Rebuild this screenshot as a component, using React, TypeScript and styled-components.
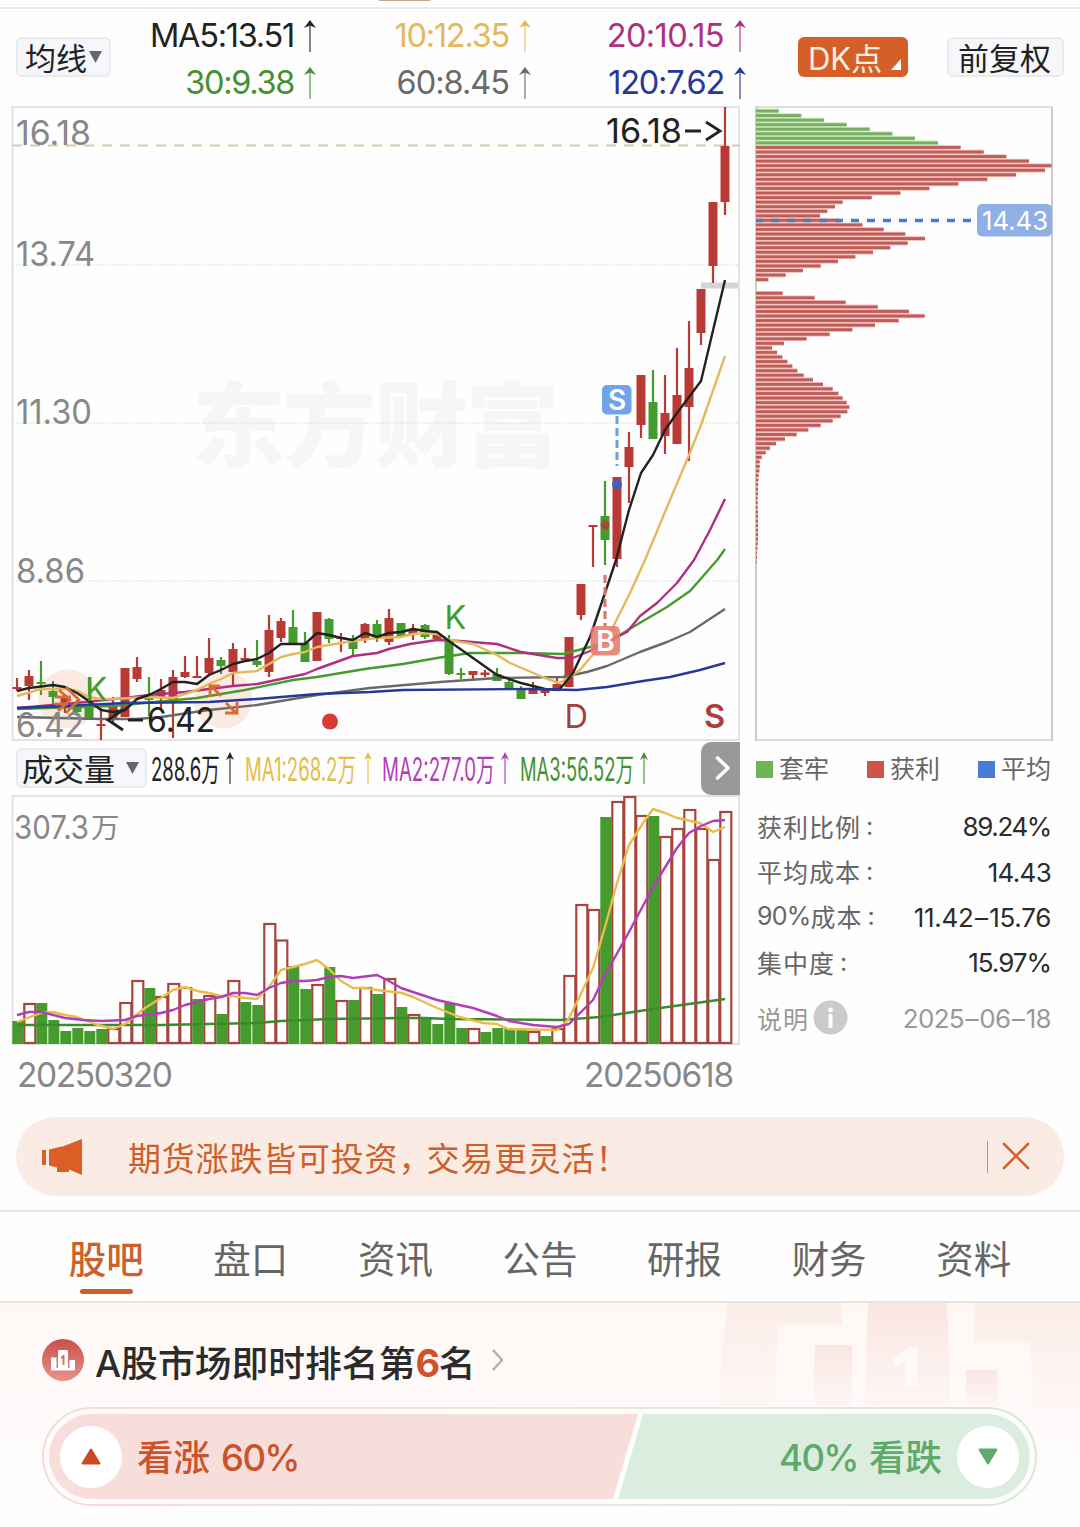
import React from "react";
import styled, { createGlobalStyle } from "styled-components";

const FONT = `Inter, "Noto Sans CJK SC", "Noto Sans", sans-serif`;

const C = {
  red: "#b93a35",
  green: "#459b2d",
  volRed: "#a8453f",
  volGreen: "#459b2d",
  orange: "#d4622c",
  yellow: "#e6b85c",
  magenta: "#b02f80",
  grey: "#6a6a6a",
  blue: "#26399b",
  purple: "#b53cb8",
  axis: "#888888",
  frame: "#e2e2e2",
};

/* ---------- data ---------- */

type Candle = [string, number, number, number, number]; // colour, body top, body bottom, high, low

const candles: Candle[] = [
  ["r", 687, 689, 678, 691], ["r", 676, 686, 670, 700], ["g", 682, 684, 661, 695],
  ["g", 691, 697, 681, 705], ["r", 697, 705, 694, 713], ["g", 706, 712, 700, 716],
  ["g", 705, 720, 677, 720], ["r", 724, 726, 708, 740], ["r", 706, 718, 697, 722],
  ["r", 668, 717, 668, 717], ["r", 667, 679, 657, 682], ["g", 697, 700, 677, 716],
  ["r", 690, 698, 679, 708], ["r", 677, 703, 670, 738], ["r", 672, 677, 656, 678],
  ["r", 676, 678, 656, 678], ["r", 658, 673, 638, 674], ["g", 660, 666, 657, 674],
  ["r", 649, 672, 643, 686], ["r", 658, 660, 648, 661], ["g", 661, 665, 640, 667],
  ["r", 630, 672, 615, 677], ["r", 621, 638, 618, 642], ["g", 627, 643, 610, 643],
  ["g", 643, 662, 632, 662], ["r", 612, 661, 612, 661], ["g", 619, 639, 618, 643],
  ["r", 637, 639, 633, 652], ["g", 639, 649, 635, 655], ["r", 624, 639, 623, 643],
  ["g", 624, 637, 620, 642], ["r", 618, 642, 609, 645], ["g", 623, 637, 623, 637],
  ["r", 630, 634, 624, 640], ["g", 625, 637, 624, 639], ["r", 634, 639, 634, 639],
  ["g", 640, 674, 635, 675], ["g", 673, 675, 668, 679], ["r", 671, 675, 671, 681],
  ["r", 672.5, 675, 670, 677], ["g", 674, 681, 668, 681], ["g", 682, 690, 680, 690],
  ["g", 689, 699, 686, 699], ["r", 689, 694, 682, 694], ["r", 690, 693, 690, 696],
  ["r", 684, 691, 678, 691], ["r", 637, 687, 637, 687], ["r", 584, 615, 584, 620],
  ["r", 525, 527, 525, 567], ["g", 516, 540, 481, 565], ["r", 477, 559, 477, 567],
  ["r", 447, 467, 432, 503], ["r", 375, 425, 375, 438], ["g", 402, 439, 370, 439],
  ["r", 413, 436, 375, 454], ["r", 395, 444, 348, 444], ["r", 368, 407, 321, 461],
  ["r", 289, 333, 289, 345], ["r", 202, 266, 202, 283], ["r", 146, 202, 107, 215],
];

const priceLines: [string, string][] = [
  [C.grey, "17,717 60,718 101,719 137,719 161,717 209,710 257,705 317,695 370,688 440,682 497,678 563,677 587,672 607,666 640,652 667,642 690,632 725,609"],
  [C.green, "17,709 113,706 197,698 245,690 293,680 317,677 365,669 403,664 437,658 470,653 521,653 563,654 590,647 605,643 623,633 643,621 667,607 690,591 705,574 718,559 725,549"],
  [C.magenta, "17,708 65,704 125,698 149,695 185,692 233,686 257,684 305,674 317,669 353,656 377,653 389,649 410,644 437,640 460,641 497,644 521,652 557,658 573,658 590,651 627,632 640,616 657,603 677,583 694,560 710,530 725,499"],
  [C.yellow, "17,696 41,689 65,689 77,691 89,697 101,699 113,699 149,697 173,698 197,690 209,684 221,679 233,673 257,671 281,657 293,654 305,652 317,647 353,641 377,638 401,637 413,634 425,633 437,634 449,640 473,644 497,655 510,663 545,678 559,683 568,678 580,670 590,658 607,640 615,623 630,593 645,560 670,500 689,455 701,425 725,356"],
  ["#222222", "17,691 29,688 53,685 65,687 77,693 89,701 101,710 113,712 125,710 137,699 149,695 161,689 173,682 185,682 197,684 209,675 221,670 233,664 245,661 257,659 269,653 281,644 305,644 317,633 329,635 341,638 353,640 365,633 377,637 389,633 401,632 413,629 425,631 437,632 449,641 473,658 497,675 521,683 545,689 559,690 573,673 590,637 605,593 616,560 629,510 641,473 653,455 665,430 677,413 701,381 725,280"],
  [C.blue, "17,708 65,706 125,703 209,702 257,699 317,694 370,692 403,690 527,689 577,690 607,687 643,681 670,677 700,670 725,663"],
];

const volumes: [string, number][] = [
  ["g", 1021], ["r", 1003], ["g", 1003], ["g", 1020], ["g", 1031], ["g", 1028],
  ["g", 1031], ["g", 1029], ["r", 1028], ["r", 1002], ["r", 980], ["g", 988],
  ["r", 996], ["r", 983], ["r", 987], ["g", 999], ["r", 995], ["g", 1014],
  ["r", 980], ["g", 1002], ["g", 1005], ["r", 923], ["r", 939.5], ["g", 966],
  ["g", 989], ["r", 984], ["g", 967], ["r", 1000], ["g", 1000], ["r", 987],
  ["g", 994], ["r", 978], ["g", 1007], ["r", 1014], ["g", 1018], ["g", 1024],
  ["g", 1003], ["g", 1028], ["r", 1028], ["g", 1032], ["g", 1028], ["g", 1028],
  ["g", 1030], ["r", 1031], ["g", 1036], ["r", 1028], ["r", 975], ["r", 904],
  ["r", 909], ["g", 817], ["r", 801], ["r", 796], ["r", 815], ["g", 816],
  ["r", 836], ["r", 828], ["r", 809], ["r", 828], ["r", 859], ["r", 811],
];

const volumeLines: [string, string][] = [
  ["#3d8a2c", "17,1025 161,1025 257,1023 281,1021 329,1019 401,1018 425,1018 449,1019 560,1020 600,1017 653,1009 725,999"],
  ["#e8bd4c", "17,1022 41,1013 53,1012 65,1015 77,1017 95,1024 113,1029 125,1024 145,1008 161,998 173,990 185,987 197,991 209,993 221,996 233,996 245,998 257,999 269,987 281,970 293,967 305,964 317,960 329,969 341,981 353,988 365,988 377,990 402,993 413,997 437,1008 460,1017 483,1023 497,1024 508,1029 557,1030 568,1020 578,1000 593,968 605,927 617,883 629,845 643,823 653,809 665,813 677,818 700,823 713,832 725,827"],
  [C.purple, "17,1015 29,1012 41,1012 65,1018 83,1020 101,1021 125,1020 137,1016 161,1013 173,1010 185,1005 209,999 221,997 233,993 245,993 257,995 269,988 281,983 293,981 305,981 317,980 329,977 341,976 353,978 377,975 389,981 401,988 413,992 437,1000 473,1008 497,1016 509,1021 533,1025 557,1027 569,1024 593,1000 605,975 629,932 653,887 677,848 689,833 701,826 713,821 725,820"],
];

// Bar lengths of the cost distribution, in thirds of a pixel.
const chips = [
  68, 136, 204, 272, 341, 409, 477, 546, 614, 683, 751, 819, 887, 867, 780, 694, 607, 520, 433, 347,
  260, 237, 214, 192, 250, 319, 383, 448, 507, 455, 403, 351, 298, 246, 194, 141, 89, 37, 0, 0,
  80, 176, 269, 365, 459, 506, 428, 357, 289, 221, 152, 84, 48, 63, 79, 94, 109, 124, 143, 171,
  201, 230, 247, 260, 272, 280, 274, 254, 230, 194, 157, 122, 87, 60, 42, 29, 17, 11, 11, 10,
  8, 7, 6, 6, 6, 5, 5, 5, 6, 6, 6, 6, 6, 6, 6, 5, 4, 3, 3, 2,
];

/* ---------- shared styles ---------- */

const Global = createGlobalStyle`
  * { box-sizing: border-box; }
  body { margin: 0; background: #fefefe; font-family: ${FONT}; }
  svg { display: block; flex: none; overflow: visible; }
  svg text { font-family: ${FONT}; }
`;

const Page = styled.div`
  width: 1080px;
  height: 1527px;
  overflow: hidden;
  display: flex;
  flex-direction: column;
`;

const Pill = styled.button<{ $w: number; $solid?: boolean; $pad?: number }>`
  width: ${(p) => p.$w}px;
  height: 40px;
  padding: 3px 0 0 ${(p) => p.$pad ?? 8}px;
  flex: none;
  display: flex;
  align-items: center;
  white-space: nowrap;
  border: ${(p) => (p.$solid ? "0" : "2px solid #e9eaec")};
  border-radius: 6px;
  background: ${(p) => (p.$solid ? "#d55f27" : "#f6f7fa")};
  color: ${(p) => (p.$solid ? "#fdeee0" : "#222")};
  font: 400 31px/36px ${FONT};
`;
const Caret = styled.svg<{ $ml?: number }>`
  margin-left: ${(p) => p.$ml ?? 2}px;
  margin-top: -3px;
`;
const Corner = styled.svg`
  margin-left: 9px;
  margin-top: 12px;
`;

/* ---------- top ---------- */

const TopEdge = styled.div`
  height: 9px;
  flex: none;
  border-bottom: 2px solid #e8eaeb;
  padding-left: 379px;
`;
const TopMark = styled.div`
  width: 51px;
  height: 1px;
  background: #c9a48c;
`;
const Header = styled.header`
  height: 97px;
  flex: none;
  display: flex;
  padding: 1px 16px 0;
`;
const PillSlot = styled.div<{ $ml?: number }>`
  margin-left: ${(p) => p.$ml ?? 0}px;
  padding-top: 27px;
`;
const MaGrid = styled.div`
  display: grid;
  grid-template-columns: 206px 215px 215px;
  grid-template-rows: 47px 47px;
  padding-top: 2px;
`;
const MaItem = styled.div<{ $c: string; $ls: number }>`
  display: flex;
  align-items: center;
  justify-content: flex-end;
  gap: 9px;
  color: ${(p) => p.$c};
  font-size: 32.5px;
  line-height: 47px;
  letter-spacing: ${(p) => p.$ls}px;
  white-space: nowrap;
`;

const UpArrow = ({ color, w = 14 }: { color: string; w?: number }) => (
  <svg width={w} height="32" viewBox={`${-w / 2} 0 ${w} 32`} fill={color}>
    <path d={`M0 0L${w / 2 - 1} 8L0 5.5L${-w / 2 + 1} 8Z`} />
    <rect x="-0.75" y="4" width="1.5" height="28" opacity=".75" />
  </svg>
);

/* ---------- charts ---------- */

const Main = styled.main`
  display: flex;
  height: 1001px;
  flex: none;
`;
const ChartColumn = styled.section`
  width: 740px;
  display: flex;
  flex-direction: column;
`;
const VolumeBar = styled.div`
  height: 54px;
  display: flex;
  align-items: center;
  padding-left: 16px;
`;
const VolItem = styled.div<{ $c: string; $w: number; $ml: number }>`
  width: ${(p) => p.$w}px;
  margin-left: ${(p) => p.$ml}px;
  height: 40px;
  display: flex;
  align-items: center;
  justify-content: space-between;
  color: ${(p) => p.$c};
`;
const Narrow = styled.span<{ $k: number }>`
  width: 0;
  font-size: 32px;
  line-height: 40px;
  padding-top: 4px;
  white-space: nowrap;
  transform: scaleX(${(p) => p.$k});
  transform-origin: left center;
`;
const NextButton = styled.button`
  width: 39px;
  height: 53px;
  margin-left: auto;
  padding: 0;
  border: 0;
  border-radius: 10px 0 0 10px;
  background: #999;
  display: flex;
  align-items: center;
  justify-content: center;
`;
const Dates = styled.div`
  display: flex;
  justify-content: space-between;
  padding: 9px 7px 0 17px;
  color: ${C.axis};
  font-size: 33.5px;
  line-height: 42px;
`;
const DateText = styled.span<{ $ls: number }>`
  letter-spacing: ${(p) => p.$ls}px;
`;

const cx = (i: number) => 17 + 12 * i;

const Num = ({ x = 16, y, w, fill = C.axis, children }: { x?: number; y: number; w: number; fill?: string; children: string }) => (
  <text x={x} y={y} fontSize="33.5" fill={fill} textLength={w} lengthAdjust="spacingAndGlyphs">{children}</text>
);

const PriceChart = () => (
  <svg width="740" height="635" viewBox="0 106 740 635">
    <text x="192" y="460" fontSize="93" fontWeight="900" fill="#f6f6f7" textLength="367">东方财富</text>
    <rect x="12.5" y="107" width="726.5" height="633" fill="none" stroke={C.frame} strokeWidth="2" />
    {[265, 423, 581].map((y) => (
      <line key={y} x1="13" x2="738" y1={y} y2={y} stroke="#d6d6d6" strokeWidth="1.2" strokeDasharray="1.5 1.5" />
    ))}
    <line x1="12" x2="740" y1="145.5" y2="145.5" stroke="#dcc8ab" strokeWidth="2" strokeDasharray="10 8" />
    <circle cx="68" cy="699" r="29.5" fill="#fbeae2" />
    <circle cx="223" cy="699" r="29.5" fill="#fbeae2" />
    <rect x="701" y="282.5" width="37" height="6" fill="#d3d4d9" />
    {candles.map(([k, t, b, h, l], i) => (
      <g key={i} fill={k === "r" ? C.red : C.green}>
        <rect x={cx(i) - 1.1} y={h} width="2.2" height={l - h} />
        <rect x={cx(i) - 4.5} y={t} width="9" height={b - t} />
      </g>
    ))}
    {priceLines.map(([c, pts]) => (
      <polyline key={c} points={pts} fill="none" stroke={c} strokeWidth="2.4" strokeLinejoin="round" />
    ))}
    <Num y={144.5} w={75}>16.18</Num>
    <Num y={266} w={79}>13.74</Num>
    <Num y={424} w={76}>11.30</Num>
    <Num y={583} w={69}>8.86</Num>
    <Num y={737} w={68}>6.42</Num>
    <g fill="none" stroke="#d96a35" strokeWidth="2.8">
      <path d="M66 687L79 700L66 713M59 690L70 700L58 711M55 697H71M55 704H68" />
      <path d="M221 696L210 685M220 686H210V697M226 703L237 714M225 713H237V702" />
    </g>
    <g fontSize="32.5">
      <text x="85.5" y="700.5" fill={C.green}>K</text>
      <text x="444.5" y="629" fill={C.green}>K</text>
      <text x="564.5" y="727.5" fill="#a83c36">D</text>
      <text x="704" y="728" fill="#b03a36" fontWeight="600">S</text>
    </g>
    <Num x={147} y={732} w={68} fill="#222">6.42</Num>
    <path d="M123 710L108 720L123 730M128 720H143" fill="none" stroke="#222" strokeWidth="2.8" />
    <Num x={606} y={142.5} w={76} fill="#222">16.18</Num>
    <path d="M685 131H701M706 122L720 131L706 140" fill="none" stroke="#222" strokeWidth="2.8" />
    <circle cx="330" cy="721.5" r="8" fill="#d93a34" />
    <line x1="617" x2="617" y1="416" y2="466" stroke="#6c9fe0" strokeWidth="3" strokeDasharray="8 4" />
    <circle cx="617" cy="484.5" r="5" fill="#4a5cb8" />
    <circle cx="605" cy="525" r="4.5" fill={C.red} opacity=".8" />
    <rect x="602" y="385" width="29.5" height="29.5" rx="5" fill="#71a2ec" />
    <text x="617" y="410" fontSize="28" fontWeight="600" fill="#fff" textAnchor="middle">S</text>
    <line x1="605" x2="605" y1="575" y2="626" stroke="#dd7064" strokeWidth="3" strokeDasharray="8 4" />
    <rect x="590.5" y="626" width="29.5" height="29.5" rx="5" fill="#e67c6c" fillOpacity=".88" />
    <text x="605.5" y="651" fontSize="28" fontWeight="600" fill="#fff" textAnchor="middle">B</text>
  </svg>
);

const VolumeChart = () => (
  <svg width="740" height="250" viewBox="0 795 740 250">
    <rect x="12.5" y="796" width="726.5" height="248" fill="none" stroke={C.frame} strokeWidth="2" />
    {volumes.map(([k, t], i) =>
      k === "g" ? (
        <rect key={i} x={cx(i) - 4.7} y={t} width="11" height={1044 - t} fill={C.volGreen} />
      ) : (
        <rect key={i} x={cx(i) - 4.7} y={t + 1} width="11" height={1042 - t} fill="#fff" stroke={C.volRed} strokeWidth="2.2" />
      )
    )}
    {volumeLines.map(([c, pts]) => (
      <polyline key={c} points={pts} fill="none" stroke={c} strokeWidth="2.4" strokeLinejoin="round" />
    ))}
    <text x="14" y="839" fontSize="32" fill={C.axis} textLength="75" lengthAdjust="spacingAndGlyphs">307.3</text>
    <text x="91" y="838" fontSize="28.5" fill={C.axis}>万</text>
  </svg>
);

/* ---------- side panel ---------- */

const Side = styled.aside`
  width: 298px;
  margin-left: 15px;
  display: flex;
  flex-direction: column;
`;
const Legend = styled.div`
  display: flex;
  justify-content: space-between;
  padding: 8px 2px 0 1px;
  height: 63px;
`;
const LegendItem = styled.div<{ $c: string }>`
  height: 40px;
  display: flex;
  align-items: center;
  gap: 6px;
  font-size: 25px;
  line-height: 38px;
  color: #666;
  &::before {
    content: "";
    width: 17px;
    height: 17px;
    background: ${(p) => p.$c};
  }
`;
const Stat = styled.div<{ $h?: number; $c?: string }>`
  height: ${(p) => p.$h ?? 45.4}px;
  display: flex;
  align-items: center;
  justify-content: space-between;
  padding: 0 2px;
  font-size: 25px;
  color: ${(p) => p.$c ?? "#666"};
`;
const StatLabel = styled.span`
  display: flex;
  align-items: center;
  gap: 5px;
  padding-bottom: 2px;
  letter-spacing: 1px;
`;
const Percent = styled.span`
  margin-right: -5px;
  letter-spacing: -0.8px;
`;
const StatValue = styled.span<{ $ls?: number; $c?: string }>`
  font-size: 26px;
  letter-spacing: ${(p) => p.$ls ?? 0}px;
  color: ${(p) => p.$c ?? "#2c2c2c"};
`;
const Dash = styled.span`
  padding: 0 1.5px;
`;

const Distribution = () => (
  <svg width="298" height="635" viewBox="755 106 298 635">
    <path d="M755 107H1052M755 740H1052" stroke="#dedede" strokeWidth="2" />
    <path d="M756 107V741M1052 107V741" stroke="#cacaca" strokeWidth="2" />
    {chips.map((w, i) =>
      w ? (
        <g key={i} transform={`translate(756 ${111 + i * 4.556})`}>
          <rect y="-2.3" width={w / 3} height="4.6" fill={i < 8 ? "#bfe6ac" : "#f3b9b4"} />
          <rect y="-1.4" width={w / 3} height="2.8" fill={i < 8 ? "#78ad62" : "#bd5d5a"} />
        </g>
      ) : null
    )}
    <line x1="756" x2="973" y1="220.5" y2="220.5" stroke="#4b7cc0" strokeWidth="3.4" strokeDasharray="8 8" strokeDashoffset="1" />
    <rect x="977" y="204" width="75" height="32.5" rx="5" fill="#8eb0e5" />
    <text x="982" y="230" fontSize="26" fill="#fff" textLength="66" lengthAdjust="spacingAndGlyphs">14.43</text>
  </svg>
);

const InfoIcon = () => (
  <svg width="35" height="35" viewBox="0 0 35 35">
    <circle cx="16.5" cy="17.5" r="17" fill="#cbcbcb" />
    <rect x="14.5" y="14" width="4" height="14" rx="1" fill="#fff" />
    <circle cx="16.5" cy="10" r="2.4" fill="#fff" />
  </svg>
);

/* ---------- banner ---------- */

const Banner = styled.div`
  height: 79px;
  margin: 10px 16px 14px;
  flex: none;
  border-radius: 40px;
  background: #faece4;
  display: flex;
  align-items: center;
  padding: 0 34px 0 26px;
  color: #cf5f2a;
`;
const BannerText = styled.span`
  margin-left: 46px;
  font-size: 33px;
  line-height: 40px;
  letter-spacing: 0.8px;
  padding-top: 4px;
  white-space: nowrap;
`;
const Tight = styled.span`
  letter-spacing: -5px;
`;
const BannerRule = styled.i`
  width: 1.5px;
  height: 32px;
  margin: 0 14px 0 auto;
  background: #d98a63;
`;

/* ---------- tabs ---------- */

const Tabs = styled.nav`
  height: 93px;
  flex: none;
  display: grid;
  grid-template-columns: repeat(7, 1fr);
  padding: 0 34px;
  border-top: 2px solid #e7e7e7;
  border-bottom: 2px solid #e4e6e6;
`;
const Tab = styled.a<{ $on?: boolean }>`
  display: flex;
  flex-direction: column;
  align-items: center;
  padding-top: 21px;
  font-size: 37.5px;
  font-weight: ${(p) => (p.$on ? 500 : 400)};
  line-height: 54px;
  color: ${(p) => (p.$on ? "#cd612c" : "#666")};
  &::after {
    content: "";
    width: 53px;
    height: 5px;
    margin-top: 2px;
    border-radius: 3px;
    background: ${(p) => (p.$on ? "#c9602c" : "transparent")};
  }
`;

/* ---------- ranking ---------- */

const Ranking = styled.section`
  position: relative;
  flex: 1;
  padding: 36px 43px 0 42px;
  background: linear-gradient(#fef8f4, #fffafa 55%, #fefefe 90%);
`;
const PodiumArt = styled.svg`
  position: absolute;
  top: 0;
  right: 0;
`;
const RankRow = styled.div`
  position: relative;
  height: 42px;
  display: flex;
  align-items: center;
  white-space: nowrap;
`;
const RankTitle = styled.h2`
  margin: 0 18px 0 11px;
  padding-top: 6px;
  font: 500 36.8px/42px ${FONT};
  color: #2b2b2b;
`;
const RankNo = styled.b`
  font-size: 38px;
  letter-spacing: -1.5px;
  color: #d0522a;
`;
const VoteFrame = styled.div`
  position: relative;
  height: 99px;
  margin-top: 26px;
  padding: 2px;
  border-radius: 50px;
  background: linear-gradient(90deg, #f5dbd8, #ece6de 50%, #d5ead9);
`;
const VoteInner = styled.div`
  height: 95px;
  padding: 5px;
  border-radius: 48px;
  background: #fffdfc;
`;
const VoteTrack = styled.div`
  height: 85px;
  border-radius: 43px;
  padding: 0 11px;
  display: flex;
  align-items: center;
  justify-content: space-between;
  background: linear-gradient(106.4deg, #f8dedb 0 58.5%, #fff 58.6% 59%, #dbeddf 59.1%);
`;
const VoteSide = styled.div<{ $c: string }>`
  display: flex;
  align-items: center;
  gap: 15px;
  color: ${(p) => p.$c};
  font-size: 36.5px;
  font-weight: 500;
  line-height: 50px;
  white-space: nowrap;
`;
const VoteLabel = styled.span`
  display: flex;
  gap: 11px;
  padding-top: 3px;
`;
const VoteShare = styled.span`
  letter-spacing: -1.6px;
`;
const VoteButton = styled.button`
  width: 62px;
  height: 62px;
  padding: 0;
  border: 0;
  border-radius: 50%;
  background: #fff;
  display: flex;
  align-items: center;
  justify-content: center;
`;

const Podium = () => (
  <PodiumArt width="370" height="106" viewBox="710 1303 370 106">
    <defs>
      <linearGradient id="fade" x1="0" y1="0" x2="0" y2="1">
        <stop offset="0" stopColor="#e59a93" stopOpacity=".2" />
        <stop offset="1" stopColor="#e59a93" stopOpacity=".04" />
      </linearGradient>
      <linearGradient id="fadeLight" x1="0" y1="0" x2="0" y2="1">
        <stop offset="0" stopColor="#e59a93" stopOpacity=".12" />
        <stop offset="1" stopColor="#e59a93" stopOpacity=".03" />
      </linearGradient>
    </defs>
    <path fill="url(#fadeLight)" d="M727 1303H842V1325H778L774 1405H718Z" />
    <path fill="url(#fade)" d="M815 1345H852V1405H813Z" />
    <path fill="url(#fade)" fillRule="evenodd" d="M868 1303H947L950 1405H865ZM893 1358L908 1347H917V1387H905V1362L893 1367Z" />
    <path fill="url(#fade)" d="M966 1370H997L999 1405H966Z" />
    <path fill="url(#fadeLight)" d="M974 1303H1080V1408H1034L1030 1343H975Z" />
  </PodiumArt>
);

const RankIcon = () => (
  <svg width="42" height="42" viewBox="0 0 42 42">
    <defs>
      <linearGradient id="medal" x1="0" y1="0" x2="0" y2="1">
        <stop offset="0" stopColor="#c94f4c" />
        <stop offset="1" stopColor="#e6938c" />
      </linearGradient>
    </defs>
    <circle cx="21" cy="21" r="21" fill="url(#medal)" />
    <path fill="#fff" fillRule="evenodd" d="M9 18.5H14.5V31H9ZM16 12.5Q16 11 17.5 11H24.5Q26 11 26 12.5V31H16ZM27.5 21H33V31H27.5ZM19 18L21 16H22.5V26H20.5V19L19 20Z" />
    <rect x="9" y="29" width="24" height="2.4" rx="1" fill="#fff" />
  </svg>
);

const maItems: [string, string, number][] = [
  ["MA5:13.51", "#222222", -1.25], ["10:12.35", C.yellow, -1.25], ["20:10.15", C.magenta, -0.6],
  ["30:9.38", "#45902f", -1.3], ["60:8.45", C.grey, -1], ["120:7.62", C.blue, -1.25],
];

export default function App() {
  return (
    <Page>
      <Global />
      <TopEdge><TopMark /></TopEdge>
      <Header>
        <PillSlot>
          <Pill $w={95} $pad={7}>
            均线
            <Caret width="13" height="12" viewBox="0 0 13 12"><path d="M0 0H13L6.5 12Z" fill="#666" /></Caret>
          </Pill>
        </PillSlot>
        <MaGrid>
          {maItems.map(([label, color, ls]) => (
            <MaItem key={label} $c={color} $ls={ls}>
              {label}
              <UpArrow color={color} />
            </MaItem>
          ))}
        </MaGrid>
        <PillSlot $ml={51}>
          <Pill $w={110} $solid $pad={10}>
            DK点
            <Corner width="10" height="11" viewBox="0 0 10 11"><path d="M10 0V11H0Z" fill="#fff" /></Corner>
          </Pill>
        </PillSlot>
        <PillSlot $ml={39}>
          <Pill $w={117} $pad={9}>前复权</Pill>
        </PillSlot>
      </Header>

      <Main>
        <ChartColumn>
          <PriceChart />
          <VolumeBar>
            <Pill $w={131} $pad={4}>
              成交量
              <Caret $ml={11} width="13" height="12" viewBox="0 0 13 12"><path d="M0 0H13L6.5 12Z" fill="#666" /></Caret>
            </Pill>
            <VolItem $c="#222" $w={84} $ml={4}>
              <Narrow $k={0.58}>288.6万</Narrow>
              <UpArrow color="#222" w={10} />
            </VolItem>
            <VolItem $c="#e3bd48" $w={128} $ml={10}>
              <Narrow $k={0.58}>MA1:268.2万</Narrow>
              <UpArrow color="#e3bd48" w={10} />
            </VolItem>
            <VolItem $c={C.purple} $w={128} $ml={9}>
              <Narrow $k={0.585}>MA2:277.0万</Narrow>
              <UpArrow color={C.purple} w={10} />
            </VolItem>
            <VolItem $c="#45902f" $w={129} $ml={10}>
              <Narrow $k={0.575}>MA3:56.52万</Narrow>
              <UpArrow color="#45902f" w={10} />
            </VolItem>
            <NextButton>
              <svg width="16" height="26" viewBox="0 0 16 26" fill="none" stroke="#fff" strokeWidth="3.6" strokeLinecap="round" strokeLinejoin="round"><path d="M4.5 3L15 13L4.5 23" /></svg>
            </NextButton>
          </VolumeBar>
          <VolumeChart />
          <Dates>
            <DateText $ls={-1.4}>20250320</DateText>
            <DateText $ls={-1.2}>20250618</DateText>
          </Dates>
        </ChartColumn>

        <Side>
          <Distribution />
          <Legend>
            <LegendItem $c="#70b455">套牢</LegendItem>
            <LegendItem $c="#d0524d">获利</LegendItem>
            <LegendItem $c="#477dd9">平均</LegendItem>
          </Legend>
          <Stat><StatLabel>获利比例<span>:</span></StatLabel><StatValue $ls={-1.4}>89.24%</StatValue></Stat>
          <Stat><StatLabel>平均成本<span>:</span></StatLabel><StatValue $ls={-0.7}>14.43</StatValue></Stat>
          <Stat><StatLabel><Percent>90%</Percent>成本<span>:</span></StatLabel><StatValue $ls={-0.3}>11.42<Dash>–</Dash>15.76</StatValue></Stat>
          <Stat><StatLabel>集中度<span>:</span></StatLabel><StatValue $ls={-1}>15.97%</StatValue></Stat>
          <Stat $h={66} $c="#999"><StatLabel>说明<InfoIcon /></StatLabel><StatValue $ls={-0.7} $c="#999">2025<Dash>–</Dash>06<Dash>–</Dash>18</StatValue></Stat>
        </Side>
      </Main>

      <Banner>
        <svg width="40" height="36" viewBox="0 0 40 36" fill="#d95f26">
          <rect y="11" width="4" height="15" />
          <path d="M7 10.5L22 7L40 0V36L27 30.5V33H15V28.5L7 26.5Z" />
        </svg>
        <BannerText>期货涨跌皆可投资<Tight>，</Tight>交易更灵活！</BannerText>
        <BannerRule />
        <svg width="28" height="28" viewBox="0 0 28 28" fill="none" stroke="#d4622c" strokeWidth="2.6" strokeLinecap="round"><path d="M2 1L26 25M26 1L2 25" /></svg>
      </Banner>

      <Tabs>
        {["股吧", "盘口", "资讯", "公告", "研报", "财务", "资料"].map((t, i) => (
          <Tab key={t} $on={i === 0}>{t}</Tab>
        ))}
      </Tabs>

      <Ranking>
        <Podium />
        <RankRow>
          <RankIcon />
          <RankTitle>A股市场即时排名第<RankNo>6</RankNo>名</RankTitle>
          <svg width="12" height="22" viewBox="0 0 12 22" fill="none" stroke="#b5b0ae" strokeWidth="2.5"><path d="M0 1L9 11L0 21" /></svg>
        </RankRow>
        <VoteFrame>
          <VoteInner>
            <VoteTrack>
              <VoteSide $c="#c9532c">
                <VoteButton>
                  <svg width="20" height="17" viewBox="0 0 20 17"><path d="M10 1.5L18.5 15.5H1.5Z" fill="#cb4a24" stroke="#cb4a24" strokeWidth="2" strokeLinejoin="round" /></svg>
                </VoteButton>
                <VoteLabel>看涨<VoteShare>60%</VoteShare></VoteLabel>
              </VoteSide>
              <VoteSide $c="#5faa6a">
                <VoteLabel><VoteShare>40%</VoteShare>看跌</VoteLabel>
                <VoteButton>
                  <svg width="20" height="17" viewBox="0 0 20 17"><path d="M10 15.5L18.5 1.5H1.5Z" fill="#5faa6a" stroke="#5faa6a" strokeWidth="2" strokeLinejoin="round" /></svg>
                </VoteButton>
              </VoteSide>
            </VoteTrack>
          </VoteInner>
        </VoteFrame>
      </Ranking>
    </Page>
  );
}
